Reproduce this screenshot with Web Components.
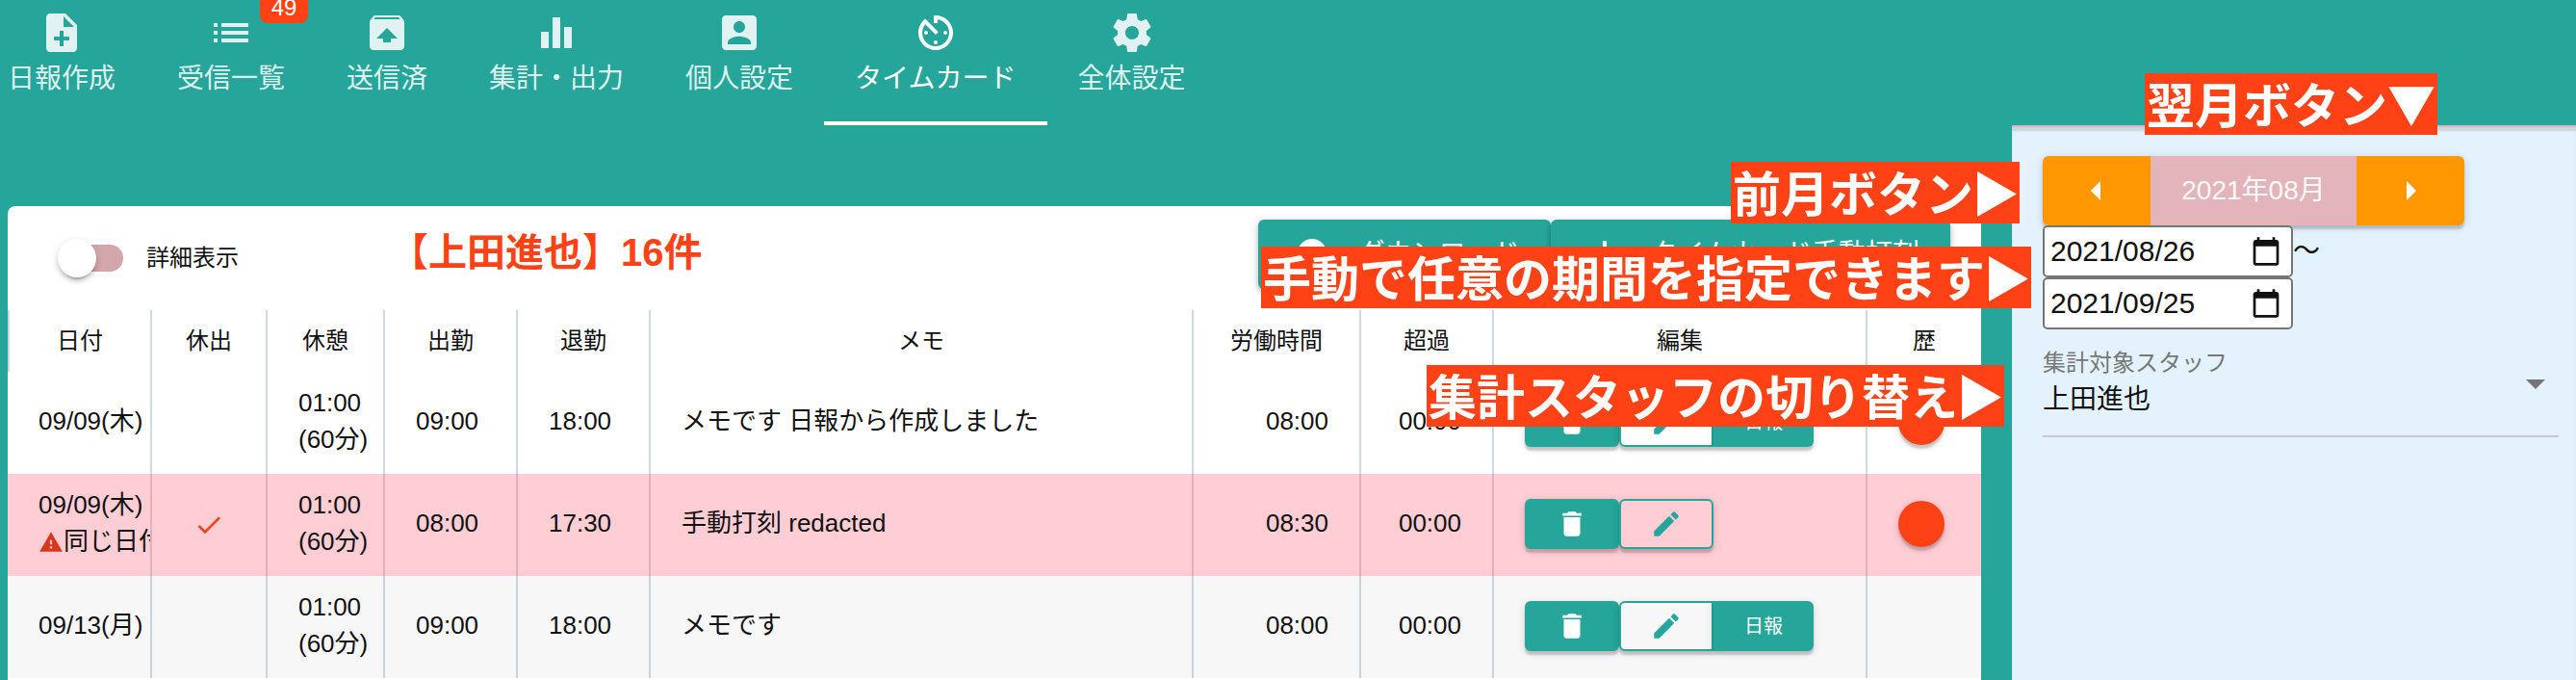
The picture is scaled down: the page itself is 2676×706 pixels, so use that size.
<!DOCTYPE html>
<html lang="ja">
<head>
<meta charset="utf-8">
<title>タイムカード</title>
<style>
  html, body { margin: 0; }
  body {
    font-family: "Liberation Sans", "Noto Sans CJK JP", sans-serif;
    color: #111;
    background: #26a69a;
  }
</style>
</head>
<body>
<time-card-app></time-card-app>

<script>
const ICONS = {
  noteAdd: '<path d="M14 2H6c-1.1 0-2 .9-2 2v16c0 1.1.9 2 2 2h12c1.1 0 2-.9 2-2V8l-6-6zm2 14h-3v3h-2v-3H8v-2h3v-3h2v3h3v2zm-3-7V3.500L18.500 9H13z"/>',
  list: '<path d="M3 13h2v-2H3v2zm0 4h2v-2H3v2zm0-8h2V7H3v2zm4 4h14v-2H7v2zm0 4h14v-2H7v2zM7 7v2h14V7H7z"/>',
  unarchive: '<path d="M20.550 5.220l-1.390-1.680C18.880 3.210 18.470 3 18 3H6c-.470 0-.880.210-1.150.550L3.460 5.220C3.170 5.570 3 6.010 3 6.500V19c0 1.100.890 2 2 2h14c1.100 0 2-.900 2-2V6.500c0-.490-.170-.930-.450-1.280zM12 9.500l5.500 5.500H14v2h-4v-2H6.500L12 9.500zM5.120 5l.820-1h12l.930 1H5.120z"/>',
  chart: '<path d="M4 11.500h4V20H4zM10 4h4v16h-4zM16 9h4v11h-4z"/>',
  person: '<path d="M3 5v14c0 1.100.890 2 2 2h14c1.100 0 2-.900 2-2V5c0-1.100-.900-2-2-2H5c-1.110 0-2 .900-2 2zm12 4c0 1.660-1.340 3-3 3s-3-1.340-3-3 1.340-3 3-3 3 1.340 3 3zm-9 8c0-2 4-3.100 6-3.100s6 1.100 6 3.100v1H6v-1z"/>',
  timer: '<path d="M11 17c0 .550.450 1 1 1s1-.450 1-1-.450-1-1-1-1 .450-1 1zm0-14v4h2V5.080c3.390.490 6 3.390 6 6.920 0 3.870-3.130 7-7 7s-7-3.130-7-7c0-1.680.590-3.220 1.580-4.420L12 13l1.410-1.410-6.800-6.800v.020C4.420 6.450 3 9.050 3 12c0 4.970 4.020 9 9 9 4.970 0 9-4.030 9-9s-4.030-9-9-9h-1zm7 9c0-.550-.450-1-1-1s-1 .450-1 1 .450 1 1 1 1-.450 1-1zM6 12c0 .550.450 1 1 1s1-.450 1-1-.450-1-1-1-1 .450-1 1z"/>',
  settings: '<path d="M19.430 12.980c.040-.320.070-.640.070-.980s-.030-.660-.070-.980l2.110-1.650c.190-.150.240-.420.120-.640l-2-3.460c-.120-.220-.390-.300-.610-.220l-2.490 1c-.520-.400-1.080-.730-1.690-.980l-.380-2.650C14.460 2.180 14.250 2 14 2h-4c-.250 0-.460.180-.490.420l-.380 2.650c-.610.250-1.170.590-1.690.980l-2.490-1c-.230-.090-.490 0-.610.220l-2 3.460c-.130.220-.070.490.120.640l2.110 1.650c-.040.320-.070.650-.070.980s.030.660.070.980l-2.110 1.650c-.190.150-.240.420-.120.640l2 3.460c.120.220.390.300.610.220l2.490-1c.520.400 1.080.730 1.690.980l.380 2.650c.030.240.240.420.490.420h4c.250 0 .460-.180.490-.420l.380-2.650c.610-.250 1.170-.590 1.690-.980l2.490 1c.230.090.490 0 .610-.220l2-3.460c.120-.220.070-.490-.120-.640l-2.110-1.650zM12 15.500c-1.930 0-3.500-1.570-3.500-3.500s1.570-3.500 3.500-3.500 3.500 1.570 3.500 3.500-1.570 3.500-3.500 3.500z"/>',
  cloud: '<path d="M19.350 10.040C18.670 6.590 15.640 4 12 4 9.110 4 6.600 5.640 5.350 8.040 2.340 8.360 0 10.910 0 14c0 3.310 2.690 6 6 6h13c2.760 0 5-2.240 5-5 0-2.640-2.050-4.780-4.650-4.960zM17 13l-5 5-5-5h3V9h4v4h3z"/>',
  add: '<path d="M19 13h-6v6h-2v-6H5v-2h6V5h2v6h6v2z"/>',
  trash: '<path d="M6 19c0 1.100.900 2 2 2h8c1.100 0 2-.900 2-2V7H6v12zM19 4h-3.500l-1-1h-5l-1 1H5v2h14V4z"/>',
  edit: '<path d="M3 17.250V21h3.750L17.810 9.940l-3.750-3.750L3 17.250zM20.710 7.040c.390-.390.390-1.020 0-1.410l-2.340-2.340c-.390-.390-1.020-.390-1.410 0l-1.830 1.830 3.750 3.750 1.830-1.830z"/>',
  check: '<path d="M9 16.170L4.830 12l-1.420 1.410L9 19 21 7l-1.410-1.410z"/>',
  warning: '<path d="M1 21h22L12 2 1 21zm12-3h-2v-2h2v2zm0-4h-2v-4h2v4z"/>',
  left: '<path d="M14 7l-5 5 5 5V7z"/>',
  right: '<path d="M10 17l5-5-5-5v10z"/>',
  down: '<path d="M7 10l5 5 5-5z"/>',
  calendar: '<path d="M20 3h-1V1h-2v2H7V1H5v2H4c-1.100 0-2 .900-2 2v16c0 1.100.900 2 2 2h16c1.100 0 2-.900 2-2V5c0-1.100-.900-2-2-2zm0 18H4V8h16v13z"/>'
};

function define(name, markup, setup) {
  const template = document.createElement('template');
  template.innerHTML = markup;
  customElements.define(name, class extends HTMLElement {
    connectedCallback() {
      if (this.shadowRoot) return;
      const content = template.content.cloneNode(true);
      if (setup) setup(this, content);
      this.attachShadow({ mode: 'open' }).append(content);
    }
  });
}

define('app-icon', `
  <style>
    :host { display: inline-block; width: 48px; height: 48px; flex: none; }
    svg { display: block; width: 100%; height: 100%; fill: currentColor; }
  </style>
  <svg viewBox="0 0 24 24" aria-hidden="true"></svg>
`, (host, root) => {
  root.querySelector('svg').innerHTML = ICONS[host.getAttribute('name')];
});

define('nav-tab', `
  <style>
    :host { display: block; position: relative; }
    a {
      display: flex; flex-direction: column; align-items: center;
      box-sizing: border-box; height: 130px; padding: 10px 32px 0;
      border-bottom: 4px solid transparent;
      color: rgba(255, 255, 255, .86); text-decoration: none;
      font-size: 28px; line-height: 48px; white-space: nowrap;
    }
    :host([first]) a { padding-left: 8px; }
    :host([active]) a { color: #fff; border-color: #fff; }
    .badge {
      position: absolute; top: -12px; right: 8px;
      width: 50px; height: 36px; border-radius: 8px;
      background: #ff4216; color: #fff;
      font-size: 24px; line-height: 40px; text-align: center;
    }
  </style>
  <a href="#"><app-icon></app-icon><slot></slot></a>
`, (host, root) => {
  root.querySelector('app-icon').setAttribute('name', host.getAttribute('icon'));
  if (host.hasAttribute('badge')) {
    const badge = document.createElement('span');
    badge.className = 'badge';
    badge.textContent = host.getAttribute('badge');
    root.append(badge);
  }
});

define('app-header', `
  <style>
    :host { display: block; height: 130px; }
    nav { display: flex; }
  </style>
  <nav>
    <nav-tab first icon="noteAdd">日報作成</nav-tab>
    <nav-tab icon="list" badge="49">受信一覧</nav-tab>
    <nav-tab icon="unarchive">送信済</nav-tab>
    <nav-tab icon="chart">集計・出力</nav-tab>
    <nav-tab icon="person">個人設定</nav-tab>
    <nav-tab icon="timer" active>タイムカード</nav-tab>
    <nav-tab icon="settings">全体設定</nav-tab>
  </nav>
`);

define('list-toolbar', `
  <style>
    :host {
      display: grid; grid-template-columns: 337px auto 1fr; align-items: center;
      box-sizing: border-box; height: 108px; padding: 0 32px 0 60px;
    }
    label { display: flex; align-items: center; gap: 24px; font-size: 24px; line-height: 36px; }
    input {
      appearance: none; position: relative; margin: 0;
      width: 60px; height: 28px; border-radius: 14px; background: #d3a6ac;
    }
    input::before {
      content: ""; position: absolute; left: -8px; top: -6px;
      width: 40px; height: 40px; border-radius: 50%; background: #fff;
      box-shadow: 0 6px 2px -4px rgba(0,0,0,.2), 0 4px 4px rgba(0,0,0,.14), 0 2px 10px rgba(0,0,0,.12);
    }
    h1 { margin: 0; padding-bottom: 12px; font-size: 40px; line-height: 48px; color: #ff4216; white-space: nowrap; }
    .actions { display: flex; justify-content: flex-end; align-self: start; padding-top: 14px; }
    button {
      display: flex; align-items: center; gap: 24px; height: 72px; padding: 0 32px;
      border: 0; border-radius: 6px; background: #26a69a; color: #fff;
      font: inherit; font-size: 28px; line-height: 40px; white-space: nowrap;
      box-shadow: 0 2px 10px rgba(0,0,0,.2), 0 4px 4px rgba(0,0,0,.14);
    }
  </style>
  <label><input type="checkbox" role="switch">詳細表示</label>
  <h1>【上田進也】16件</h1>
  <div class="actions">
    <button type="button"><app-icon name="cloud"></app-icon>ダウンロード</button>
    <button type="button"><app-icon name="add"></app-icon>タイムカード手動打刻</button>
  </div>
`);

define('row-actions', `
  <style>
    :host { display: flex; }
    button {
      display: flex; align-items: center; justify-content: center;
      box-sizing: border-box; width: 98px; height: 52px; padding: 0;
      border: 0; border-radius: 6px; background: #26a69a; color: #fff;
      font: inherit; font-size: 20px; line-height: 28px;
      box-shadow: 0 2px 8px rgba(0,0,0,.14), 0 4px 2px rgba(0,0,0,.16);
    }
    app-icon { width: 34px; height: 34px; }
    .edit { border: 2px solid #26a69a; background: var(--row-color, #fff); color: #26a69a; }
    .report { width: 104px; border-radius: 0 6px 6px 0; }
    :host([report]) .edit { border-radius: 6px 0 0 6px; }
  </style>
  <button type="button" aria-label="削除"><app-icon name="trash"></app-icon></button>
  <button type="button" class="edit" aria-label="編集"><app-icon name="edit"></app-icon></button>
`, (host, root) => {
  if (host.hasAttribute('report')) {
    const report = document.createElement('button');
    report.type = 'button';
    report.className = 'report';
    report.textContent = '日報';
    root.append(report);
  }
});

define('time-table', `
  <style>
    :host { display: block; }
    table { width: 100%; table-layout: fixed; border-collapse: separate; border-spacing: 0; }
    th, td { box-sizing: border-box; border-right: 2px solid rgba(60, 110, 145, .26); white-space: nowrap; overflow: hidden; }
    th:last-child, td:last-child { border-right: 0; }
    th { height: 64px; padding: 0; font-size: 24px; font-weight: 400; line-height: 36px; }
    th:first-child { border-left: 2px solid #cad8e2; }
    td { height: 106px; padding: 0 32px 4px; font-size: 26px; line-height: 38px; text-align: left; }
    .date { width: 150px; } .off { width: 120px; } .rest { width: 122px; }
    .time, .over { width: 138px; } .work { width: 174px; } .edit { width: 388px; } .log { width: 118px; }
    td.num { text-align: right; }
    td.mid { text-align: center; }
    td.mid app-icon { width: 32px; height: 32px; color: #ff4216; vertical-align: middle; }
    td.control { padding-bottom: 2px; }
    tr.warn { --row-color: #ffcdd4; }
    tr.warn td { border-right-color: rgba(0, 0, 0, .13); }
    tr.alt { --row-color: #f7f7f7; }
    tbody tr { background: var(--row-color, #fff); }
    td.date app-icon { width: 26px; height: 26px; color: #d9381a; vertical-align: -5px; }
    .dot {
      display: block; width: 48px; height: 48px; padding: 0; border: 0; border-radius: 50%; background: #ff4216;
      box-shadow: 0 2px 8px rgba(0,0,0,.14), 0 4px 2px rgba(0,0,0,.16);
    }
  </style>
  <table>
    <thead>
      <tr>
        <th class="date">日付</th><th class="off">休出</th><th class="rest">休憩</th>
        <th class="time">出勤</th><th class="time">退勤</th><th>メモ</th>
        <th class="work">労働時間</th><th class="over">超過</th><th class="edit">編集</th><th class="log">歴</th>
      </tr>
    </thead>
    <tbody>
      <tr>
        <td>09/09(木)</td><td></td><td>01:00<br>(60分)</td><td>09:00</td><td>18:00</td>
        <td>メモです 日報から作成しました</td><td class="num">08:00</td><td class="num">00:00</td>
        <td class="control"><row-actions report></row-actions></td>
        <td class="control"><button type="button" class="dot" aria-label="履歴"></button></td>
      </tr>
      <tr class="warn">
        <td class="date">09/09(木)<br><app-icon name="warning"></app-icon>同じ日付</td>
        <td class="mid"><app-icon name="check"></app-icon></td><td>01:00<br>(60分)</td><td>08:00</td><td>17:30</td>
        <td>手動打刻 redacted</td><td class="num">08:30</td><td class="num">00:00</td>
        <td class="control"><row-actions></row-actions></td>
        <td class="control"><button type="button" class="dot" aria-label="履歴"></button></td>
      </tr>
      <tr class="alt">
        <td>09/13(月)</td><td></td><td>01:00<br>(60分)</td><td>09:00</td><td>18:00</td>
        <td>メモです</td><td class="num">08:00</td><td class="num">00:00</td>
        <td class="control"><row-actions report></row-actions></td><td></td>
      </tr>
    </tbody>
  </table>
`);

define('date-field', `
  <style>
    :host {
      display: flex; align-items: center; box-sizing: border-box; width: 260px; height: 54px;
      padding: 0 10px 0 6px; border: 2px solid #767676; border-radius: 5px; background: #fff;
    }
    input {
      flex: 1; min-width: 0; padding: 0; border: 0; outline: 0; background: none; color: #111;
      font: inherit; font-size: 30px; line-height: 40px;
    }
    button { padding: 0; border: 0; background: none; color: #111; }
    app-icon { display: block; width: 32px; height: 32px; }
  </style>
  <input type="text">
  <button type="button" aria-label="カレンダー"><app-icon name="calendar"></app-icon></button>
`, (host, root) => {
  const input = root.querySelector('input');
  input.setAttribute('value', host.getAttribute('value'));
  input.setAttribute('aria-label', host.getAttribute('label'));
});

define('period-panel', `
  <style>
    :host {
      display: block; box-sizing: border-box; padding: 32px 18px 0 32px; background: #e3f2fd;
      box-shadow: inset 0 2px 0 #dcb4bc, inset 0 6px 2px #c8d6df;
    }
    .month {
      display: flex; width: 438px; height: 72px; border-radius: 6px;
      box-shadow: 0 2px 8px rgba(0,0,0,.16), 0 4px 2px rgba(0,0,0,.14);
    }
    .month button {
      flex: 1; display: flex; align-items: center; justify-content: center; padding: 0;
      border: 0; background: #ff9800; color: #fff;
    }
    .month button:first-child { border-radius: 6px 0 0 6px; }
    .month button:last-child { border-radius: 0 6px 6px 0; }
    .month span {
      width: 214px; background: #e3b4ba; color: #fafafa;
      font-size: 28px; line-height: 72px; text-align: center;
    }
    .range { display: flex; align-items: center; font-size: 28px; line-height: 40px; }
    .staff { margin-top: 16px; border-bottom: 2px solid #c9c8d0; height: 94px; position: relative; }
    label { display: block; font-size: 24px; line-height: 38px; color: #777; }
    select {
      display: block; appearance: none; width: 100%; height: 38px; padding: 0; border: 0; outline: 0;
      background: none; color: #111; font: inherit; font-size: 28px; line-height: 38px;
    }
    .staff app-icon { position: absolute; right: 0; top: 16px; color: #757575; pointer-events: none; }
  </style>
  <div class="month">
    <button type="button" aria-label="前月"><app-icon name="left"></app-icon></button>
    <span>2021年08月</span>
    <button type="button" aria-label="翌月"><app-icon name="right"></app-icon></button>
  </div>
  <div class="range"><date-field value="2021/08/26" label="開始日"></date-field>〜</div>
  <div class="range"><date-field value="2021/09/25" label="終了日"></date-field></div>
  <div class="staff">
    <label for="staff">集計対象スタッフ</label>
    <select id="staff"><option>上田進也</option></select>
    <app-icon name="down"></app-icon>
  </div>
`);

define('guide-note', `
  <style>
    :host {
      display: block; position: absolute; box-sizing: border-box; height: 64px; padding: 0 2px;
      background: #ff4216; color: #fff;
      font-family: "Noto Sans CJK JP", sans-serif;
      font-size: 50px; font-weight: 700; line-height: 60px; white-space: nowrap;
    }
    ::slotted(span) { margin: 0 -2px; }
  </style>
  <slot></slot>
`);

define('time-card-app', `
  <style>
    :host { display: flex; flex-direction: column; position: relative; min-height: 100vh; overflow: hidden; }
    main { flex: 1; display: flex; }
    .card { flex: 1; min-width: 0; margin: 84px 32px 0 8px; background: #fff; border-radius: 8px 8px 0 0; }
    period-panel { width: 586px; flex: none; }
    .next { top: 76px; right: 144px; }
    .prev { top: 168px; right: 578px; }
    .manual { top: 256px; right: 566px; }
    .switch { top: 379px; right: 594px; }
  </style>
  <app-header></app-header>
  <main>
    <section class="card">
      <list-toolbar></list-toolbar>
      <time-table></time-table>
    </section>
    <period-panel></period-panel>
  </main>
  <guide-note class="next">翌月ボタン▼</guide-note>
  <guide-note class="prev">前月ボタン<span>▶</span></guide-note>
  <guide-note class="manual">手動で任意の期間を指定できます<span>▶</span></guide-note>
  <guide-note class="switch">集計スタッフの切り替え<span>▶</span></guide-note>
`);
</script>
</body>
</html>
